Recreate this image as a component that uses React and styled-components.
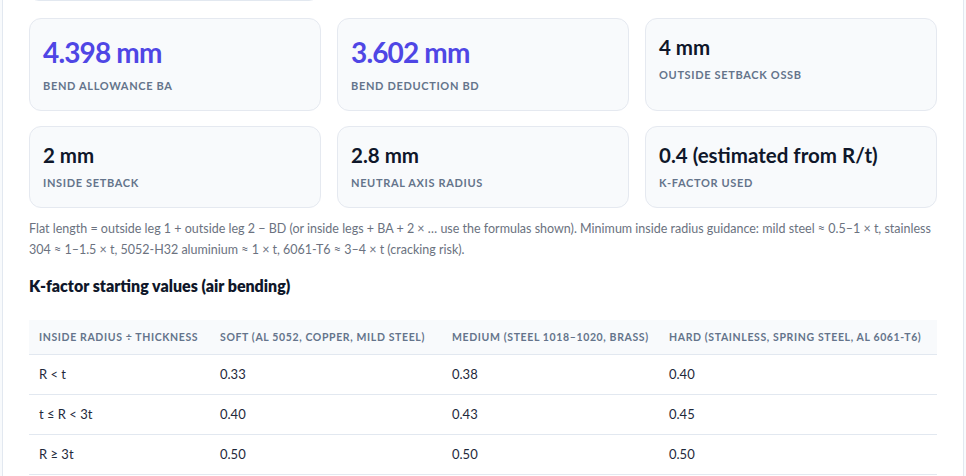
import React from 'react'
import styled, { createGlobalStyle } from 'styled-components'

const GlobalStyle = createGlobalStyle`
  html, body {
    margin: 0;
    padding: 0;
    background: #f8fafc;
  }
  body {
    font-family: Lato, "Noto Sans", sans-serif;
    color: #0f172a;
    overflow: hidden;
  }
`

const Page = styled.div`
  padding: 0 2px;
  margin-top: -58px;
`

const Panel = styled.section`
  background: #ffffff;
  border: 1px solid #e2e8f0;
  border-radius: 16px;
  padding: 16px 26px 40px 26px;
`

const Field = styled.div`
  width: 290px;
  height: 42px;
  box-sizing: border-box;
  border: 1px solid #e2e8f0;
  border-radius: 10px;
  background: #ffffff;
  margin-bottom: 17px;
`

const ResultGrid = styled.div`
  display: grid;
  grid-template-columns: repeat(3, 1fr);
  gap: 15px 16px;
`

const ResultCard = styled.div`
  background: #f8fafc;
  border: 1px solid #e5e9f0;
  border-radius: 12px;
  padding: 17px 13px;
`

const Value = styled.div`
  font-size: ${p => (p.$big ? '28px' : '20.5px')};
  line-height: ${p => (p.$big ? '33px' : '22px')};
  font-weight: 700;
  letter-spacing: ${p => (p.$big ? '-0.03em' : '0')};
  color: ${p => (p.$accent ? '#4f46e5' : '#0f172a')};
`

const Label = styled.div`
  margin-top: 10px;
  font-size: 11px;
  line-height: 14px;
  font-weight: 700;
  letter-spacing: 0.06em;
  text-transform: uppercase;
  color: #64748b;
`

const Note = styled.p`
  margin: 10px 0 0 0;
  font-size: 12.5px;
  line-height: 21px;
  color: #6b7280;
`

const Heading = styled.h3`
  margin: 16px 0 0 0;
  font-size: 16px;
  line-height: 20px;
  font-weight: 800;
  color: #0f172a;
`

const Table = styled.table`
  width: 100%;
  margin-top: 24px;
  border-collapse: collapse;
  table-layout: fixed;
`

const Th = styled.th`
  background: #f8fafc;
  padding: 10px 10px;
  text-align: left;
  font-size: 10.5px;
  line-height: 14px;
  font-weight: 700;
  letter-spacing: 0.06em;
  text-transform: uppercase;
  color: #64748b;
  white-space: nowrap;
  border-bottom: 1px solid #e2e8f0;
`

const Td = styled.td`
  padding: 10px 10px;
  font-size: 13px;
  line-height: 19px;
  color: #1e293b;
  border-bottom: 1px solid #e2e8f0;
`

const results = [
  { value: '4.398 mm', label: 'Bend allowance BA', big: true, accent: true },
  { value: '3.602 mm', label: 'Bend deduction BD', big: true, accent: true },
  { value: '4 mm', label: 'Outside setback OSSB' },
  { value: '2 mm', label: 'Inside setback' },
  { value: '2.8 mm', label: 'Neutral axis radius' },
  { value: '0.4 (estimated from R/t)', label: 'K-factor used' },
]

const columns = [
  { title: 'Inside radius ÷ thickness', width: 181 },
  { title: 'Soft (Al 5052, copper, mild steel)', width: 232 },
  { title: 'Medium (steel 1018–1020, brass)', width: 217 },
  { title: 'Hard (stainless, spring steel, Al 6061-T6)', width: 278 },
]

const rows = [
  ['R < t', '0.33', '0.38', '0.40'],
  ['t ≤ R < 3t', '0.40', '0.43', '0.45'],
  ['R ≥ 3t', '0.50', '0.50', '0.50'],
]

const App = () => {
  return (
    <Page>
      <GlobalStyle />
      <Panel>
        <Field />
        <ResultGrid>
          {results.map(r => (
            <ResultCard key={r.label}>
              <Value $big={r.big} $accent={r.accent}>{r.value}</Value>
              <Label>{r.label}</Label>
            </ResultCard>
          ))}
        </ResultGrid>
        <Note>
          Flat length = outside leg 1 + outside leg 2 − BD (or inside legs + BA + 2 × … use the formulas shown). Minimum inside radius guidance: mild steel ≈ 0.5–1 × t, stainless 304 ≈ 1–1.5 × t, 5052-H32 aluminium ≈ 1 × t, 6061-T6 ≈ 3–4 × t (cracking risk).
        </Note>
        <Heading>K-factor starting values (air bending)</Heading>
        <Table>
          <colgroup>
            {columns.map(c => (
              <col key={c.title} style={{ width: c.width }} />
            ))}
          </colgroup>
          <thead>
            <tr>
              {columns.map(c => (
                <Th key={c.title}>{c.title}</Th>
              ))}
            </tr>
          </thead>
          <tbody>
            {rows.map(r => (
              <tr key={r[0]}>
                {r.map((cell, i) => (
                  <Td key={i}>{cell}</Td>
                ))}
              </tr>
            ))}
          </tbody>
        </Table>
      </Panel>
    </Page>
  )
}

export default App
